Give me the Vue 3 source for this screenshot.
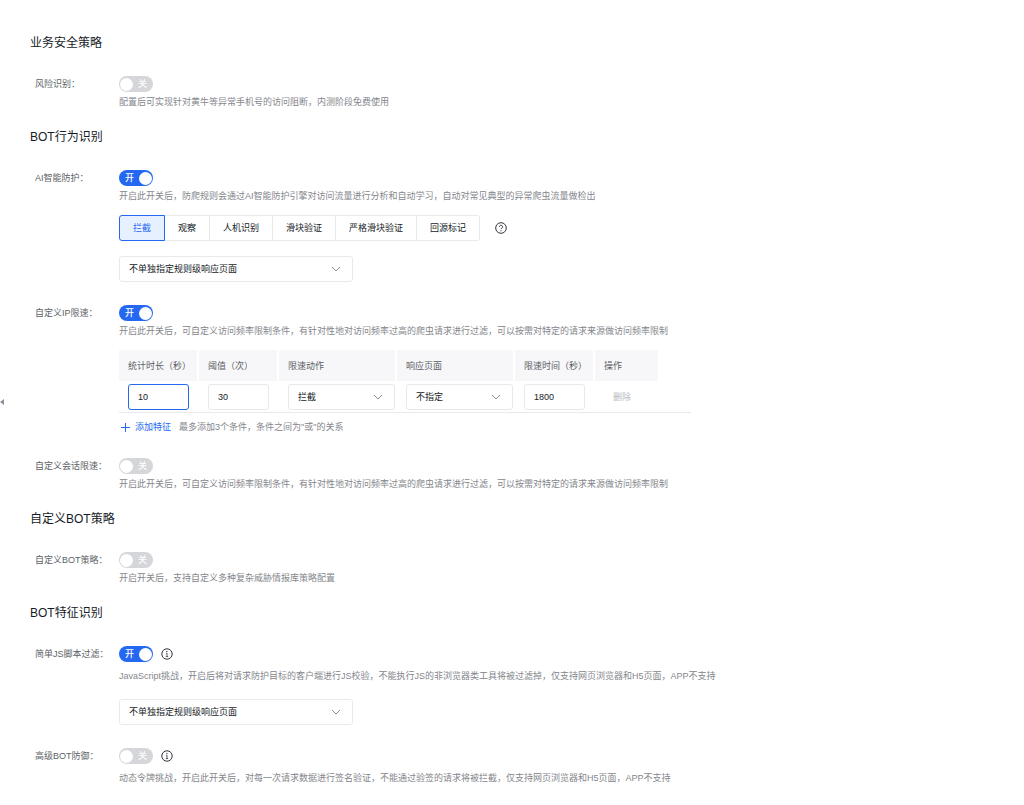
<script setup>
import { ref, reactive } from 'vue'

const state = reactive({
  risk: false,
  ai: true,
  ip: true,
  session: false,
  custom: false,
  js: true,
  advanced: false
})

const actions = ['拦截', '观察', '人机识别', '滑块验证', '严格滑块验证', '回源标记']
const action = ref('拦截')

const sections = [
  {
    title: '业务安全策略',
    items: [
      { key: 'risk', label: '风险识别', desc: '配置后可实现针对黄牛等异常手机号的访问阻断，内测阶段免费使用' }
    ]
  },
  {
    title: 'BOT行为识别',
    items: [
      {
        key: 'ai',
        label: 'AI智能防护',
        desc: '开启此开关后，防爬规则会通过AI智能防护引擎对访问流量进行分析和自动学习，自动对常见典型的异常爬虫流量做检出',
        segments: true,
        page: true
      },
      {
        key: 'ip',
        label: '自定义IP限速',
        desc: '开启此开关后，可自定义访问频率限制条件，有针对性地对访问频率过高的爬虫请求进行过滤，可以按需对特定的请求来源做访问频率限制',
        table: true
      },
      {
        key: 'session',
        label: '自定义会话限速',
        desc: '开启此开关后，可自定义访问频率限制条件，有针对性地对访问频率过高的爬虫请求进行过滤，可以按需对特定的请求来源做访问频率限制'
      }
    ]
  },
  {
    title: '自定义BOT策略',
    items: [
      { key: 'custom', label: '自定义BOT策略', desc: '开启开关后，支持自定义多种复杂威胁情报库策略配置' }
    ]
  },
  {
    title: 'BOT特征识别',
    items: [
      {
        key: 'js',
        label: '简单JS脚本过滤',
        info: true,
        desc: 'JavaScript挑战，开启后将对请求防护目标的客户端进行JS校验，不能执行JS的非浏览器类工具将被过滤掉，仅支持网页浏览器和H5页面，APP不支持',
        page: true
      },
      {
        key: 'advanced',
        label: '高级BOT防御',
        info: true,
        desc: '动态令牌挑战，开启此开关后，对每一次请求数据进行签名验证，不能通过验签的请求将被拦截，仅支持网页浏览器和H5页面，APP不支持'
      }
    ]
  }
]

const rule = reactive({ duration: '10', threshold: '30', action: '拦截', page: '不指定', limit: '1800' })
</script>

<template>
  <main class="page">
    <button class="collapse" type="button" aria-label="收起">
      <svg width="5" height="8" viewBox="0 0 5 8"><path d="M0 4 4 1v6z" fill="#8d919b" /></svg>
    </button>

    <section v-for="section in sections" :key="section.title" class="section">
      <h2 class="title">{{ section.title }}</h2>
      <div class="items">
        <div v-for="item in section.items" :key="item.key" class="item">
          <label class="name" :for="item.key">{{ item.label }}：</label>
          <div class="content">
            <div class="control">
              <span class="switch" :class="{ on: state[item.key] }">
                <input :id="item.key" v-model="state[item.key]" class="hidden-input" type="checkbox" role="switch" />
                <span class="state">{{ state[item.key] ? '开' : '关' }}</span>
                <span class="knob"></span>
              </span>
              <button v-if="item.info" class="icon" type="button" aria-label="说明">
                <svg width="12" height="12" viewBox="0 0 12 12" fill="none" stroke="#33363d">
                  <circle cx="6" cy="6" r="5.2" />
                  <path d="M5 5.2h1v3.4M4.8 8.6h2.4" stroke-width=".8" />
                  <circle cx="5.9" cy="3.4" r=".6" fill="#33363d" stroke="none" />
                </svg>
              </button>
            </div>
            <p class="desc" :class="{ spaced: item.info }">{{ item.desc }}</p>

            <div v-if="item.segments" class="segment-row">
              <div class="segments" role="radiogroup" aria-label="防护动作">
                <label v-for="name in actions" :key="name" class="segment" :class="{ active: action === name }">
                  <input v-model="action" class="hidden-input" type="radio" name="action" :value="name" />
                  {{ name }}
                </label>
              </div>
              <button class="icon" type="button" aria-label="帮助">
                <svg width="12" height="12" viewBox="0 0 12 12" fill="none" stroke="#33363d">
                  <circle cx="6" cy="6" r="5.3" />
                  <path d="M4.4 4.8a1.6 1.5 0 1 1 2.5 1.2Q6 6.5 6 7.2" />
                  <circle cx="6" cy="8.8" r=".6" fill="#33363d" stroke="none" />
                </svg>
              </button>
            </div>

            <div v-if="item.page" class="select page-select">
              <select aria-label="响应页面"><option>不单独指定规则级响应页面</option></select>
              <svg width="10" height="6" viewBox="0 0 10 6"><path d="m1 1 4 4 4-4" fill="none" stroke="#8d919b" /></svg>
            </div>

            <div v-if="item.table" class="rules">
              <div class="table-wrap">
                <table>
                  <colgroup>
                    <col class="narrow" /><col class="narrow" /><col class="wide" /><col class="wide" /><col class="narrow" /><col class="last" />
                  </colgroup>
                  <thead>
                    <tr>
                      <th>统计时长（秒）</th>
                      <th>阈值（次）</th>
                      <th>限速动作</th>
                      <th>响应页面</th>
                      <th>限速时间（秒）</th>
                      <th>操作</th>
                    </tr>
                  </thead>
                  <tbody>
                    <tr>
                      <td><input v-model="rule.duration" class="text focused" type="text" aria-label="统计时长（秒）" /></td>
                      <td><input v-model="rule.threshold" class="text" type="text" aria-label="阈值（次）" /></td>
                      <td>
                        <div class="select">
                          <select v-model="rule.action" aria-label="限速动作"><option>拦截</option></select>
                          <svg width="10" height="6" viewBox="0 0 10 6"><path d="m1 1 4 4 4-4" fill="none" stroke="#8d919b" /></svg>
                        </div>
                      </td>
                      <td>
                        <div class="select">
                          <select v-model="rule.page" aria-label="限速响应页面"><option>不指定</option></select>
                          <svg width="10" height="6" viewBox="0 0 10 6"><path d="m1 1 4 4 4-4" fill="none" stroke="#8d919b" /></svg>
                        </div>
                      </td>
                      <td><input v-model="rule.limit" class="text" type="text" aria-label="限速时间（秒）" /></td>
                      <td><button class="delete" type="button" disabled>删除</button></td>
                    </tr>
                  </tbody>
                </table>
              </div>
              <div class="add-row">
                <button class="add" type="button">
                  <svg width="9" height="9" viewBox="0 0 9 9"><path d="M4.5 0v9M0 4.5h9" fill="none" stroke="#2468f2" /></svg>
                  添加特征
                </button>
                <span>最多添加3个条件，条件之间为"或"的关系</span>
              </div>
            </div>
          </div>
        </div>
      </div>
    </section>
  </main>
</template>

<style>
body {
  margin: 0;
  background: #fff;
}
</style>

<style scoped>
.page {
  position: relative;
  box-sizing: border-box;
  display: flex;
  flex-direction: column;
  gap: 17px;
  padding: 33px 30px 16px;
  color: #151b26;
  font-family: "Liberation Sans", "Noto Sans CJK SC", sans-serif;
  font-size: 9px;
  line-height: 16px;
}

button,
input,
select {
  box-sizing: border-box;
  margin: 0;
  padding: 0;
  border: 0;
  background: none;
  color: inherit;
  font: inherit;
}

.collapse {
  position: absolute;
  top: 398px;
  left: 0;
  display: flex;
}

.title {
  margin: 0 0 23px;
  font-size: 12px;
  font-weight: 400;
  line-height: 20px;
}

.items {
  display: flex;
  flex-direction: column;
  gap: 23px;
}

.item {
  display: flex;
  padding-left: 5px;
}

.name {
  flex: none;
  width: 84px;
  color: #5c5f66;
}

.content {
  flex: 1;
  min-width: 0;
}

.control {
  display: flex;
  align-items: center;
  gap: 8px;
  height: 16px;
}

.switch {
  position: relative;
  box-sizing: border-box;
  display: flex;
  flex-direction: row-reverse;
  align-items: center;
  justify-content: space-between;
  width: 34px;
  height: 16px;
  padding: 0 6px 0 1px;
  border-radius: 8px;
  background: #d4d6d9;
  color: #fff;
  font-weight: 500;
}

.switch.on {
  flex-direction: row;
  padding: 0 1px 0 6px;
  background: #2468f2;
}

.knob {
  width: 13px;
  height: 13px;
  border-radius: 50%;
  background: #fff;
}

.hidden-input {
  position: absolute;
  inset: 0;
  opacity: 0;
}

.icon {
  display: flex;
}

.desc {
  margin: 2px 0 0;
  color: #84868c;
}

.desc.spaced {
  margin-top: 6px;
}

.segment-row {
  display: flex;
  align-items: center;
  gap: 15px;
  margin-top: 11px;
}

.segments {
  display: flex;
}

.segment {
  position: relative;
  padding: 4px 13px;
  border: 1px solid #e8e9eb;
  border-left-width: 0;
}

.segment:first-child {
  border-left-width: 1px;
  border-radius: 3px 0 0 3px;
}

.segment:last-child {
  border-radius: 0 3px 3px 0;
}

.segment.active {
  border-color: #2468f2;
  background: #e6f0ff;
  color: #2468f2;
}

.select {
  box-sizing: border-box;
  display: grid;
  align-items: center;
  height: 26px;
  border: 1px solid #e8e9eb;
  border-radius: 3px;
}

.select select {
  grid-area: 1 / 1;
  width: 100%;
  height: 24px;
  padding: 0 24px 0 9px;
  appearance: none;
}

.select svg {
  grid-area: 1 / 1;
  justify-self: end;
  margin-right: 11px;
  pointer-events: none;
}

.page-select {
  max-width: 234px;
  margin-top: 15px;
}

.rules {
  max-width: 572px;
  margin-top: 11px;
}

.table-wrap {
  border-bottom: 1px solid #e8e9eb;
}

table {
  width: 539px;
  border-collapse: separate;
  border-spacing: 0;
  table-layout: fixed;
}

.narrow {
  width: 80px;
}

.wide {
  width: 118px;
}

.last {
  width: 63px;
}

th {
  height: 31px;
  padding: 0 0 0 9px;
  border-right: 2px solid #fff;
  background: #f7f7f9;
  color: #5c5f66;
  font-weight: 400;
  text-align: left;
  white-space: nowrap;
}

th:last-child {
  border-right: 0;
}

td {
  padding: 3px 2px 2px 9px;
}

.text {
  display: block;
  width: 61px;
  height: 26px;
  padding: 0 9px;
  border: 1px solid #e8e9eb;
  border-radius: 3px;
  outline: 0;
}

.focused {
  border-color: #2468f2;
}

.delete {
  padding-left: 9px;
  color: #b8babf;
}

.add-row {
  display: flex;
  gap: 8px;
  margin-top: 6px;
  color: #84868c;
}

.add {
  display: flex;
  align-items: center;
  gap: 5px;
  padding-left: 2px;
  color: #2468f2;
}
</style>
